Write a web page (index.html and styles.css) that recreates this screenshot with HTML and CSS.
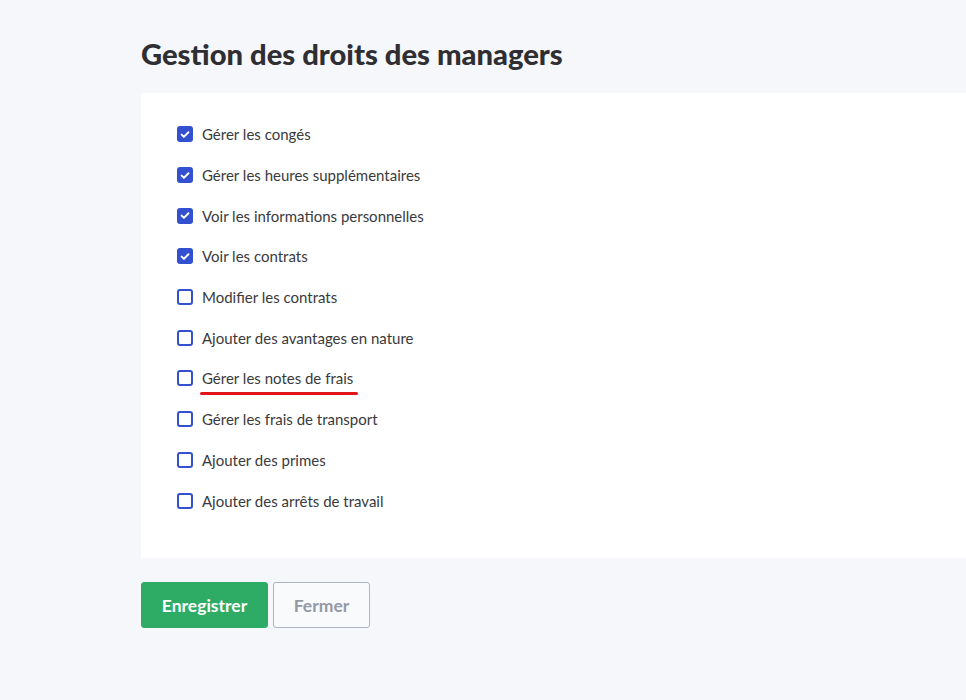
FILE: index.html
```html
<!DOCTYPE html>
<html lang="fr">
<head>
  <meta charset="UTF-8">
  <meta name="viewport" content="width=device-width, initial-scale=1.0">
  <title>Gestion des droits des managers</title>
  <link rel="stylesheet" href="styles.css">
</head>
<body>
  <main>
    <h1>Gestion des droits des managers</h1>
    <div class="card">
      <label class="right"><span class="box checked"><svg viewBox="0 0 16 16"><path d="M3.5 8.2l3 3L12.6 5" /></svg></span>Gérer les congés</label>
      <label class="right"><span class="box checked"><svg viewBox="0 0 16 16"><path d="M3.5 8.2l3 3L12.6 5" /></svg></span>Gérer les heures supplémentaires</label>
      <label class="right"><span class="box checked"><svg viewBox="0 0 16 16"><path d="M3.5 8.2l3 3L12.6 5" /></svg></span>Voir les informations personnelles</label>
      <label class="right"><span class="box checked"><svg viewBox="0 0 16 16"><path d="M3.5 8.2l3 3L12.6 5" /></svg></span>Voir les contrats</label>
      <label class="right"><span class="box"></span>Modifier les contrats</label>
      <label class="right"><span class="box"></span>Ajouter des avantages en nature</label>
      <label class="right"><span class="box"></span><span class="marked">Gérer les notes de frais</span></label>
      <label class="right"><span class="box"></span>Gérer les frais de transport</label>
      <label class="right"><span class="box"></span>Ajouter des primes</label>
      <label class="right"><span class="box"></span>Ajouter des arrêts de travail</label>
    </div>
    <div class="actions">
      <button class="btn btn-primary">Enregistrer</button>
      <button class="btn btn-outline">Fermer</button>
    </div>
  </main>
</body>
</html>
```

FILE: styles.css
```css
* {
  box-sizing: border-box;
}

body {
  margin: 0;
  background: #f6f7fb;
  font-family: Lato, "Open Sans", sans-serif;
  color: #333;
}

main {
  padding: 36px 0 0 141px;
}

h1 {
  margin: 0 0 21px;
  font-size: 29.2px;
  font-weight: 900;
  color: #2f2f33;
  line-height: 36px;
}

.card {
  background: #fff;
  padding: 21px 36px 32px;
  display: flex;
  flex-direction: column;
  height: 465px;
}

.right {
  display: flex;
  align-items: center;
  height: 40.7px;
  font-size: 15px;
  color: #3a3a3d;
}

.box {
  width: 16px;
  height: 16px;
  border: 2px solid #3350d0;
  border-radius: 3px;
  margin-right: 9px;
  display: inline-flex;
  align-items: center;
  justify-content: center;
  flex-shrink: 0;
}

.box.checked {
  background: #3350d0;
}

.box svg {
  width: 15px;
  height: 15px;
  fill: none;
  stroke: #fff;
  stroke-width: 2.6;
  stroke-linecap: round;
  stroke-linejoin: round;
}

.marked {
  position: relative;
}

.marked::after {
  content: "";
  position: absolute;
  left: -2px;
  right: -5px;
  bottom: -8px;
  height: 3px;
  border-radius: 2px;
  background: #e3151b;
}

.actions {
  display: flex;
  gap: 5px;
  margin-top: 24px;
}

.btn {
  font-family: Lato, "Open Sans", sans-serif;
  font-size: 17.5px;
  font-weight: 700;
  height: 46px;
  border-radius: 3px;
  cursor: pointer;
}

.btn-primary {
  width: 127px;
  background: #2eab65;
  border: 1px solid #2eab65;
  color: #fff;
}

.btn-outline {
  width: 97px;
  background: #f9fafc;
  border: 1px solid #aeb3c0;
  color: #9499a6;
}
```
